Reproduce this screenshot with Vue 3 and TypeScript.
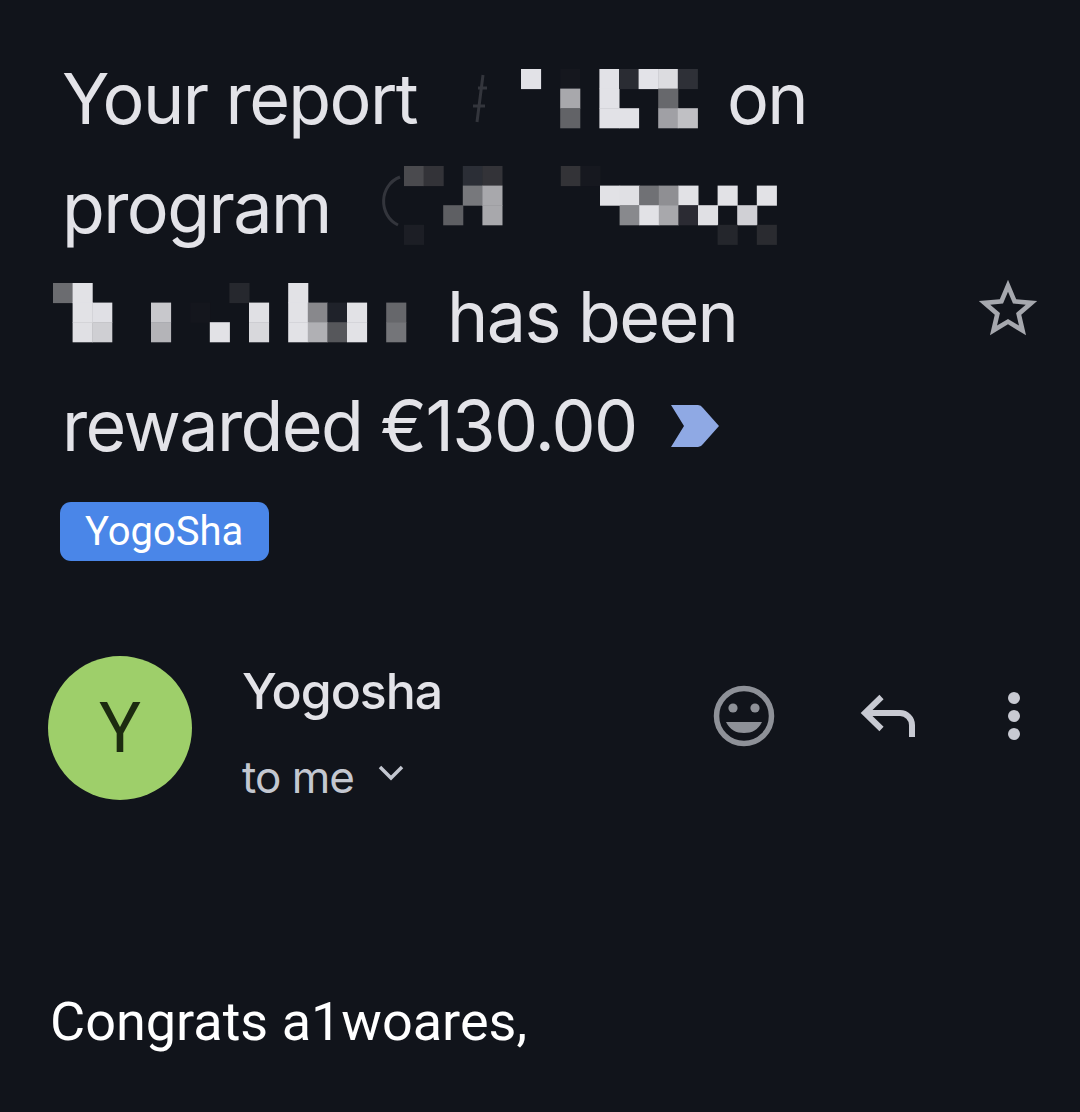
<template>
  <div class="page">
    <div class="head">
      <div class="subject">
        <div class="line">
          <span class="w-report">Your report</span>
          <svg class="blur" width="258" height="109">
            <path d="M14 31 L8 78 M9 44 H18 M4 62 H16" class="ghost" />
            <rect v-for="(c, i) in cellsOne" :key="i" :x="52 + c[0] * cell" :y="25 + c[1] * cell" :width="cell + 0.5" :height="cell + 0.5" :fill="c[2]" />
          </svg>
          <span>on</span>
        </div>
        <div class="line">
          <span class="w-program">program</span>
          <svg class="blur" width="420" height="109">
            <path d="M22 24 C1 32 0 62 20 72" class="ghost" />
            <rect v-for="(c, i) in cellsTwo" :key="i" :x="26 + c[0] * cell" :y="13 + c[1] * cell" :width="cell + 0.5" :height="cell + 0.5" :fill="c[2]" />
          </svg>
        </div>
        <div class="line line-three">
          <svg class="blur w-name" width="394" height="109">
            <rect v-for="(c, i) in cellsThree" :key="i" :x="c[0] * cell" :y="21 + c[1] * cell" :width="cell + 0.5" :height="cell + 0.5" :fill="c[2]" />
          </svg>
          <span>has been</span>
        </div>
        <div class="line">
          <span>rewarded €130.00</span>
          <svg class="marker" width="52" height="44" viewBox="0 0 52 44">
            <path d="M2 1 H29 Q32 1 34 4 L50 22 L34 40 Q32 43 29 43 H2 L15 22 Z" />
          </svg>
        </div>
        <span class="chip">YogoSha</span>
      </div>
      <svg class="star" width="70" height="70" viewBox="0 0 24 24">
        <path d="M22 9.24l-7.19-.62L12 2 9.19 8.63 2 9.24l5.46 4.73L5.82 21 12 17.27 18.18 21l-1.63-7.03L22 9.24zM12 15.4l-3.76 2.27 1-4.28-3.32-2.88 4.38-.38L12 6.1l1.71 4.04 4.38.38-3.32 2.88 1 4.28L12 15.4z" />
      </svg>
    </div>

    <div class="sender">
      <div class="avatar">Y</div>
      <div class="who">
        <div class="name">Yogosha</div>
        <div class="to">
          <span>to me</span>
          <svg width="30" height="20" viewBox="0 0 30 20">
            <path d="M4 4 L15 15 L26 4" />
          </svg>
        </div>
      </div>
      <div class="actions">
        <svg class="act" width="72" height="72" viewBox="0 0 72 72">
          <circle cx="36" cy="36" r="27.5" class="smile-ring" />
          <circle cx="25" cy="28" r="4.6" class="smile-fill" />
          <circle cx="47" cy="28" r="4.6" class="smile-fill" />
          <path d="M18 42 H54 C50 50 44 53 36 53 C28 53 22 50 18 42 Z" class="smile-fill" />
        </svg>
        <svg class="act reply" width="72" height="72" viewBox="0 0 72 72">
          <path d="M29.5 17 L13 33 L29.5 49 M13 33 H48 A12 12 0 0 1 60 45 V57" />
        </svg>
        <svg class="act more" width="72" height="72" viewBox="0 0 72 72">
          <circle cx="36" cy="18" r="6" />
          <circle cx="36" cy="36" r="6" />
          <circle cx="36" cy="54" r="6" />
        </svg>
      </div>
    </div>

    <p class="body">Congrats a1woares,</p>
  </div>
</template>

<script setup lang="ts">
type Cell = [number, number, string]

const cell = 19.6

// mosaic over the redacted names: [col, row, colour]
const cellsOne: Cell[] = [
  [0, 0, '#e2e2e7'],
  [2, 0, '#15171e'], [2, 1, '#a8a8ac'], [2, 2, '#626367'],
  [4, 0, '#e2e2e7'], [4, 1, '#e2e2e7'], [4, 2, '#e2e2e7'],
  [5, 0, '#2a2c33'], [5, 2, '#e2e2e7'],
  [6, 0, '#e3e3e8'],
  [7, 0, '#dcdce0'], [7, 1, '#67686c'], [7, 2, '#a0a0a5'],
  [8, 0, '#2e3037'], [8, 2, '#c0c0c4'],
]

const cellsTwo: Cell[] = [
  [0, 0, '#4a4a4e'], [1, 0, '#333338'], [3, 0, '#2b2e36'], [4, 0, '#333338'], [8, 0, '#333337'], [9, 0, '#16181f'],
  [3, 1, '#77787c'], [4, 1, '#a8a8ac'], [10, 1, '#e2e2e6'], [11, 1, '#e0e0e4'], [12, 1, '#707175'],
  [13, 1, '#8f8f93'], [14, 1, '#e2e2e6'], [16, 1, '#e2e2e6'], [18, 1, '#e2e2e6'],
  [2, 2, '#5e5f63'], [4, 2, '#a8a8ac'], [11, 2, '#88898d'], [12, 2, '#e2e2e6'], [13, 2, '#a8a8ac'],
  [14, 2, '#2b2b33'], [15, 2, '#e0e0e4'], [17, 2, '#d0d0d5'],
  [0, 3, '#1c1e25'], [16, 3, '#24262c'], [18, 3, '#2a2b30'],
]

const cellsThree: Cell[] = [
  [0, 0, '#6b6c70'], [1, 0, '#e2e2e6'], [9, 0, '#26282e'], [12, 0, '#e2e2e6'],
  [1, 1, '#e2e2e6'], [2, 1, '#e0e0e5'], [5, 1, '#c8c8cc'], [7, 1, '#14161d'], [10, 1, '#e0e0e4'],
  [12, 1, '#e2e2e6'], [13, 1, '#88888c'], [14, 1, '#1f222a'], [15, 1, '#e2e2e6'], [17, 1, '#66676b'],
  [1, 2, '#e0e0e4'], [2, 2, '#cfcfd3'], [5, 2, '#b4b4b8'], [8, 2, '#e2e2e6'], [10, 2, '#d8d8dc'],
  [12, 2, '#e2e2e6'], [13, 2, '#b0b0b4'], [14, 2, '#56575b'], [15, 2, '#e2e2e6'], [17, 2, '#747579'],
]
</script>

<style>
html,
body {
  margin: 0;
  background: #11141b;
}
</style>

<style scoped>
.page {
  width: 1080px;
  height: 1112px;
  overflow: hidden;
  background: #11141b;
  font-family: Inter, "Noto Sans", sans-serif;
}

.head {
  display: flex;
  align-items: center;
  padding: 44px 37px 0 62px;
}

.subject {
  flex: 1;
}

.line {
  display: flex;
  align-items: center;
  height: 109px;
  font-size: 70px;
  letter-spacing: -1.6px;
  color: #e3e3e8;
  white-space: nowrap;
}

.w-report {
  width: 407px;
}

.w-program {
  width: 316px;
}

.line-three {
  margin-left: -9px;
}

.ghost {
  fill: none;
  stroke: #33353c;
  stroke-width: 3;
}

.marker {
  margin-left: 32px;
  fill: #8fa9e4;
}

.chip {
  display: inline-block;
  margin-top: 22px;
  margin-left: -2px;
  padding: 0 26px 0 25px;
  height: 59px;
  line-height: 59px;
  border-radius: 11px;
  background: #4a86e8;
  color: #fff;
  font-family: Roboto, sans-serif;
  font-size: 40px;
}

.star {
  fill: #a6a8ae;
  margin-top: 12px;
}

.sender {
  display: flex;
  align-items: flex-start;
  margin-top: 95px;
  padding: 0 30px 0 48px;
}

.avatar {
  width: 144px;
  height: 144px;
  border-radius: 50%;
  background: #9ecf6a;
  color: #1c2b10;
  font-family: Roboto, sans-serif;
  font-size: 70px;
  line-height: 144px;
  text-align: center;
}

.who {
  margin-left: 50px;
  flex: 1;
}

.name {
  font-size: 50px;
  line-height: 70px;
  letter-spacing: -1px;
  color: #e3e3e8;
  font-weight: 500;
}

.to {
  display: flex;
  align-items: center;
  margin-top: 26px;
  font-size: 44px;
  line-height: 50px;
  letter-spacing: -1px;
  color: #c3c7d0;
}

.to svg {
  margin-left: 22px;
  margin-top: -8px;
  fill: none;
  stroke: #c3c7d0;
  stroke-width: 3.5;
}

.actions {
  display: flex;
  gap: 72px;
  margin-top: 24px;
}

.act + .act + .act {
  margin-left: -18px;
}

.smile-ring {
  fill: none;
  stroke: #8e9198;
  stroke-width: 5.5;
}

.smile-fill {
  fill: #8e9198;
}

.reply path {
  fill: none;
  stroke: #c8cad2;
  stroke-width: 6;
}

.more {
  fill: #c8cad2;
}

.body {
  margin: 190px 0 0 50px;
  font-family: Roboto, sans-serif;
  font-size: 54px;
  line-height: 60px;
  color: #fff;
}
</style>
